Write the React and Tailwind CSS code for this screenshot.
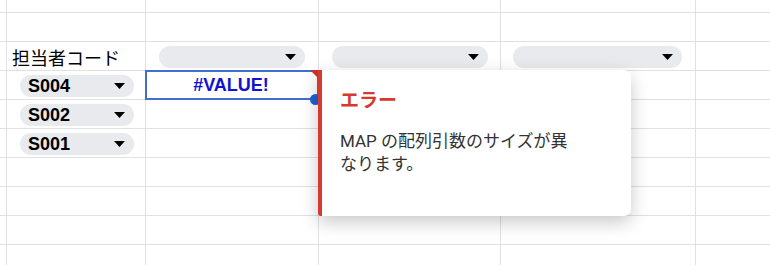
import React from "react";

const cols = ["w-[7px]", "w-[139px]", "w-[173px]", "w-[182px]", "w-[195px]", "flex-1"];

function Arrow() {
  return (
    <svg width="11" height="6" viewBox="0 0 11 6" className="shrink-0">
      <path d="M0 0 L11 0 L5.5 6 Z" fill="#000" />
    </svg>
  );
}

function Pill({ label, width }) {
  return (
    <div
      className={`h-[22px] rounded-full bg-[#e8eaed] flex items-center justify-between pl-[8px] pr-[9px] ${width}`}
    >
      <span className="text-[18px] font-bold text-black leading-none font-['Liberation_Sans',Arial,sans-serif]">
        {label}
      </span>
      <Arrow />
    </div>
  );
}

function Row({ h, last, children }) {
  return (
    <div className={`flex ${h} ${last ? "" : "border-b border-[#e1e1e1]"}`}>
      {children}
    </div>
  );
}

function Cell({ i, children, className = "" }) {
  return (
    <div className={`${cols[i]} ${i < 5 ? "border-r border-[#e1e1e1]" : ""} shrink-0 h-full ${className}`}>
      {children}
    </div>
  );
}

function EmptyCells() {
  return (
    <>
      {[0, 1, 2, 3, 4, 5].map((i) => (
        <Cell key={i} i={i} />
      ))}
    </>
  );
}

export default function App() {
  return (
    <div className="relative w-[770px] h-[265px] overflow-hidden bg-white font-['Noto_Sans_CJK_JP',sans-serif]">
      <Row h="h-[13px]">
        <EmptyCells />
      </Row>
      <Row h="h-[29px]">
        <EmptyCells />
      </Row>
      <Row h="h-[29px]">
        <Cell i={0} />
        <Cell i={1} className="flex items-center pl-[5px]">
          <span className="text-[18px] text-black leading-none font-['Noto_Sans_CJK_JP',sans-serif] pt-[1px]">
            担当者コード
          </span>
        </Cell>
        <Cell i={2} className="flex items-center pl-[13px] pt-[1px]">
          <Pill label="" width="w-[146px]" />
        </Cell>
        <Cell i={3} className="flex items-center pl-[13px] pt-[1px]">
          <Pill label="" width="w-[156px]" />
        </Cell>
        <Cell i={4} className="flex items-center pl-[12px] pt-[1px]">
          <Pill label="" width="w-[169px]" />
        </Cell>
        <Cell i={5} />
      </Row>
      <Row h="h-[29px]">
        <Cell i={0} />
        <Cell i={1} className="flex items-center pl-[13px] pt-[1px]">
          <Pill label="S004" width="w-[114px]" />
        </Cell>
        <Cell i={2} className="relative flex items-center justify-center">
          <span className="text-[18px] font-bold text-[#1111d4] leading-none font-['Liberation_Sans',Arial,sans-serif] pr-[2px]">
            #VALUE!
          </span>
          <div className="absolute left-[-1px] top-[-1px] right-[-1px] bottom-[-1px] border-2 border-[#3f6fd1]" />
        </Cell>
        <Cell i={3} />
        <Cell i={4} />
        <Cell i={5} />
      </Row>
      <Row h="h-[29px]">
        <Cell i={0} />
        <Cell i={1} className="flex items-center pl-[13px] pt-[1px]">
          <Pill label="S002" width="w-[114px]" />
        </Cell>
        <Cell i={2} />
        <Cell i={3} />
        <Cell i={4} />
        <Cell i={5} />
      </Row>
      <Row h="h-[29px]">
        <Cell i={0} />
        <Cell i={1} className="flex items-center pl-[13px] pt-[1px]">
          <Pill label="S001" width="w-[114px]" />
        </Cell>
        <Cell i={2} />
        <Cell i={3} />
        <Cell i={4} />
        <Cell i={5} />
      </Row>
      <Row h="h-[29px]">
        <EmptyCells />
      </Row>
      <Row h="h-[29px]">
        <EmptyCells />
      </Row>
      <Row h="h-[29px]">
        <EmptyCells />
      </Row>
      <Row h="h-[21px]" last>
        <EmptyCells />
      </Row>

      {/* error indicator triangle */}
      <svg className="absolute left-[310px] top-[70px]" width="9" height="9" viewBox="0 0 9 9">
        <path d="M0 0 L9 0 L9 9 Z" fill="#c9342c" />
      </svg>
      {/* fill handle */}
      <div className="absolute left-[310px] top-[94px] w-[11px] h-[11px] rounded-full bg-[#1b63d6]" />

      {/* tooltip */}
      <div className="absolute left-[318px] top-[70px] w-[313px] h-[146px] bg-white rounded-r-[7px] rounded-bl-[3px] border-l-[4px] border-[#d63a2f] shadow-[0_6px_18px_rgba(0,0,0,0.22)] pl-[18px] pt-[16px]">
        <div className="text-[19px] font-bold text-[#d63a2f] leading-[26px] font-['Noto_Sans_CJK_JP',sans-serif]">
          エラー
        </div>
        <div className="mt-[18px] w-[242px] text-[17px] leading-[23px] text-[#333333] font-['Roboto','Noto_Sans_CJK_JP',sans-serif]">
          MAP の配列引数のサイズが異なります。
        </div>
      </div>
    </div>
  );
}
